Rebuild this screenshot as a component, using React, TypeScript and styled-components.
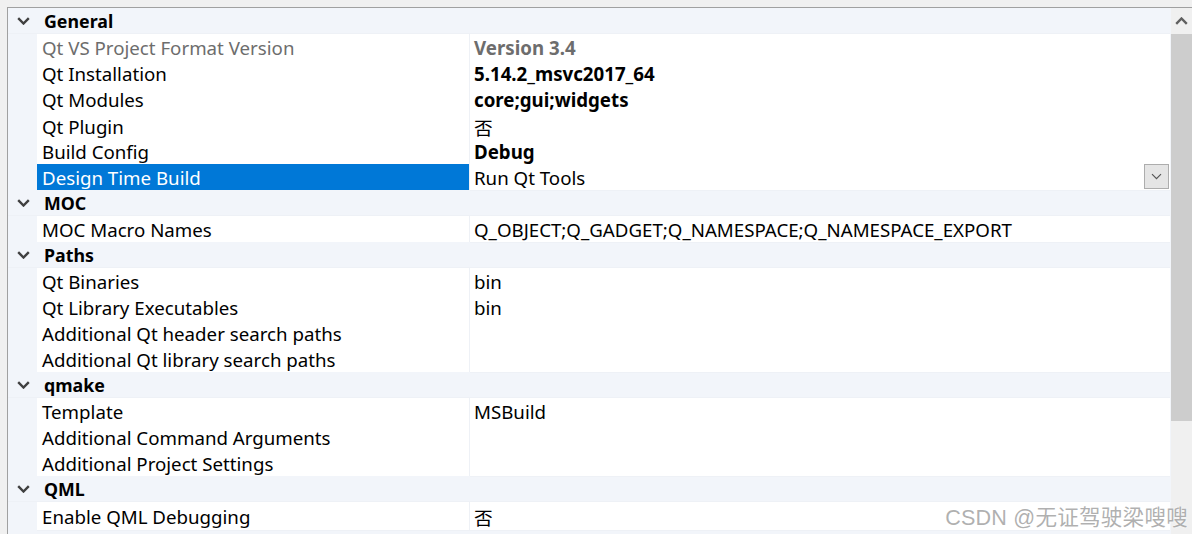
import React from "react";
import styled, { createGlobalStyle } from "styled-components";

const Global = createGlobalStyle`
  html, body { margin: 0; padding: 0; background: #f0f0f0; }
  body { width: 1192px; height: 534px; overflow: hidden; font-family: "Noto Sans", "Noto Sans CJK SC", sans-serif; }
`;

const Outer = styled.div`
  position: relative;
  width: 1192px;
  height: 534px;
  background: #f0f0f0;
  padding: 7px 0 0 7px;
  box-sizing: border-box;
  overflow: hidden;
`;

const Frame = styled.div`
  display: flex;
  height: 100%;
  border-top: 1px solid #a0a0a0;
  border-left: 1px solid #a0a0a0;
  background: #f2f5fa;
`;

const Grid = styled.div`
  flex: 1;
  display: flex;
  flex-direction: column;
  min-width: 0;
`;

const HeaderRow = styled.div`
  display: flex;
  align-items: center;
  height: 26px;
  box-sizing: border-box;
  padding-top: 2px;
  background: #f2f5fa;
  border-bottom: 1px solid #eef1f6;
  flex-shrink: 0;
`;

const Chevron = styled.span`
  width: 29px;
  display: flex;
  justify-content: center;
  align-items: center;
  padding-left: 1px;
  margin-top: -2px;
`;

const HeaderText = styled.span`
  font-size: 17.8px;
  font-weight: 700;
  color: #000;
  padding-left: 6px;
  line-height: 1;
`;

const PropRow = styled.div`
  display: grid;
  grid-template-columns: 29px 433px 1fr;
  height: 26px;
  flex-shrink: 0;
`;

const Gutter = styled.div`
  background: #f2f5fa;
`;

const NameCell = styled.div<{ $selected?: boolean; $disabled?: boolean }>`
  display: flex;
  align-items: center;
  box-sizing: border-box;
  padding: 1px 0 0 5px;
  font-size: 18.7px;
  white-space: nowrap;
  background: ${(p) => (p.$selected ? "#0078d7" : "#fff")};
  color: ${(p) => (p.$selected ? "#fff" : p.$disabled ? "#6d6d6d" : "#000")};
  border-bottom: 1px solid ${(p) => (p.$selected ? "#0078d7" : "#eef1f6")};
  border-right: 1px solid #eef1f6;
`;

const ValueCell = styled.div<{ $bold?: boolean; $disabled?: boolean }>`
  display: flex;
  align-items: center;
  box-sizing: border-box;
  padding: 1px 0 0 4px;
  font-size: 18.7px;
  white-space: nowrap;
  background: #fff;
  font-weight: ${(p) => (p.$bold ? 700 : 400)};
  color: ${(p) => (p.$disabled ? "#6d6d6d" : "#000")};
  border-bottom: 1px solid #eef1f6;
  position: relative;
`;

const DropButton = styled.div`
  position: absolute;
  right: 1px;
  top: 0;
  width: 25px;
  height: 25px;
  box-sizing: border-box;
  border: 1px solid #adadad;
  background: #e5e5e5;
  display: flex;
  align-items: center;
  justify-content: center;
`;

const Scrollbar = styled.div`
  width: 21px;
  margin-left: 1px;
  display: flex;
  flex-direction: column;
  background: #f0f0f0;
  flex-shrink: 0;
`;

const ScrollArrow = styled.div`
  height: 26px;
  display: flex;
  align-items: center;
  justify-content: center;
  flex-shrink: 0;
`;

const Thumb = styled.div`
  height: 387px;
  background: #cdcdcd;
  flex-shrink: 0;
`;

const Track = styled.div`
  flex: 1;
  position: relative;
`;

const ArrowDownAbs = styled.div`
  position: absolute;
  left: 0;
  right: 0;
  bottom: -8px;
  display: flex;
  justify-content: center;
`;

const Watermark = styled.div`
  position: absolute;
  right: 4px;
  bottom: 3px;
  font-family: "Liberation Sans", "Noto Sans CJK SC", sans-serif;
  font-size: 21.6px;
  color: rgba(150, 150, 150, 0.75);
  text-shadow: 0 0 2px #fff;
  letter-spacing: 0.2px;
  pointer-events: none;
`;

const ChevronDown = ({ color = "#404040", w = 13, h = 8, sw = 2.4 }) => (
  <svg width={w} height={h} viewBox="0 0 13 8">
    <polyline points="1.2,1.2 6.5,6.5 11.8,1.2" fill="none" stroke={color} strokeWidth={sw} />
  </svg>
);

const ChevronUp = () => (
  <svg width="13" height="8" viewBox="0 0 13 8">
    <polyline points="1.2,6.8 6.5,1.5 11.8,6.8" fill="none" stroke="#606060" strokeWidth={2.4} />
  </svg>
);

type Prop = { name: string; value?: string; bold?: boolean; disabled?: boolean; selected?: boolean; combo?: boolean };
type Section = { title: string; props: Prop[] };

const sections: Section[] = [
  {
    title: "General",
    props: [
      { name: "Qt VS Project Format Version", value: "Version 3.4", bold: true, disabled: true },
      { name: "Qt Installation", value: "5.14.2_msvc2017_64", bold: true },
      { name: "Qt Modules", value: "core;gui;widgets", bold: true },
      { name: "Qt Plugin", value: "否" },
      { name: "Build Config", value: "Debug", bold: true },
      { name: "Design Time Build", value: "Run Qt Tools", selected: true, combo: true },
    ],
  },
  {
    title: "MOC",
    props: [{ name: "MOC Macro Names", value: "Q_OBJECT;Q_GADGET;Q_NAMESPACE;Q_NAMESPACE_EXPORT" }],
  },
  {
    title: "Paths",
    props: [
      { name: "Qt Binaries", value: "bin" },
      { name: "Qt Library Executables", value: "bin" },
      { name: "Additional Qt header search paths" },
      { name: "Additional Qt library search paths" },
    ],
  },
  {
    title: "qmake",
    props: [
      { name: "Template", value: "MSBuild" },
      { name: "Additional Command Arguments" },
      { name: "Additional Project Settings" },
    ],
  },
  {
    title: "QML",
    props: [{ name: "Enable QML Debugging", value: "否" }],
  },
];

export default function App() {
  return (
    <>
      <Global />
      <Outer>
        <Frame>
          <Grid>
            {sections.map((s) => (
              <React.Fragment key={s.title}>
                <HeaderRow>
                  <Chevron>
                    <ChevronDown />
                  </Chevron>
                  <HeaderText>{s.title}</HeaderText>
                </HeaderRow>
                {s.props.map((p) => (
                  <PropRow key={p.name}>
                    <Gutter />
                    <NameCell $selected={p.selected} $disabled={p.disabled}>
                      {p.name}
                    </NameCell>
                    <ValueCell $bold={p.bold} $disabled={p.disabled}>
                      {p.value ?? ""}
                      {p.combo && (
                        <DropButton>
                          <ChevronDown color="#555" w={11} h={7} sw={1.4} />
                        </DropButton>
                      )}
                    </ValueCell>
                  </PropRow>
                ))}
              </React.Fragment>
            ))}
          </Grid>
          <Scrollbar>
            <ScrollArrow>
              <ChevronUp />
            </ScrollArrow>
            <Thumb />
            <Track>
              <ArrowDownAbs>
                <ChevronDown color="#606060" />
              </ArrowDownAbs>
            </Track>
          </Scrollbar>
        </Frame>
        <Watermark>CSDN @无证驾驶梁嗖嗖</Watermark>
      </Outer>
    </>
  );
}
